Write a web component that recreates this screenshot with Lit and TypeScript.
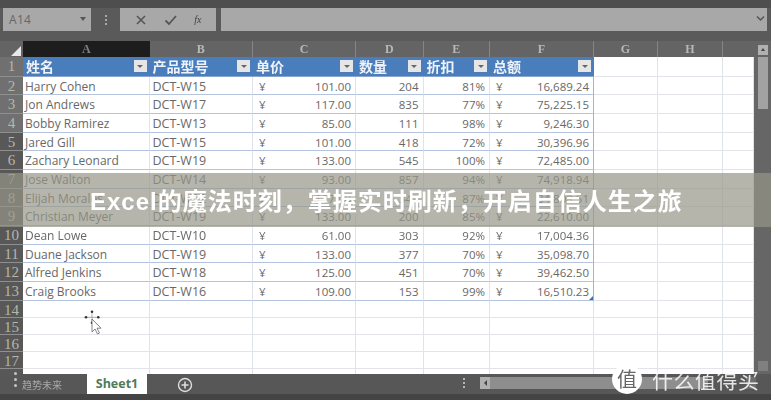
import { LitElement, html, css } from "lit";
import { customElement } from "lit/decorators.js";

const COLS = [
  ["A", 126.5], ["B", 103.5], ["C", 103], ["D", 67.5], ["E", 66.5], ["F", 104], ["G", 64], ["H", 65], ["", 31],
] as const;
const HEAD = ["姓名", "产品型号", "单价", "数量", "折扣", "总额"];
const ROWS = [
  ["Harry Cohen", "DCT-W15", "101.00", "204", "81%", "16,689.24"],
  ["Jon Andrews", "DCT-W17", "117.00", "835", "77%", "75,225.15"],
  ["Bobby Ramirez", "DCT-W13", "85.00", "111", "98%", "9,246.30"],
  ["Jared Gill", "DCT-W15", "101.00", "418", "72%", "30,396.96"],
  ["Zachary Leonard", "DCT-W19", "133.00", "545", "100%", "72,485.00"],
  ["Jose Walton", "DCT-W14", "93.00", "857", "94%", "74,918.94"],
  ["Elijah Morales", "DCT-W12", "117.00", "342", "87%", "34,808.51"],
  ["Christian Meyer", "DCT-W19", "133.00", "200", "85%", "22,610.00"],
  ["Dean Lowe", "DCT-W10", "61.00", "303", "92%", "17,004.36"],
  ["Duane Jackson", "DCT-W19", "133.00", "377", "70%", "35,098.70"],
  ["Alfred Jenkins", "DCT-W18", "125.00", "451", "70%", "39,462.50"],
  ["Craig Brooks", "DCT-W16", "109.00", "153", "99%", "16,510.23"],
];

@customElement("app-root")
export class AppRoot extends LitElement {
  static styles = css`
    :host { display: block; width: 771px; height: 400px; overflow: hidden; position: relative; background: #5a5a5a; font-family: "Liberation Sans", "Noto Sans CJK SC", sans-serif; }
    .shot { width: 771px; height: 400px; display: flex; flex-direction: column; filter: blur(0.6px); }
    .top { height: 8px; background: #4e4e4e; }
    .fbar { height: 23px; margin-bottom: 10px; display: flex; align-items: stretch; padding: 0 4px 0 3px; background: #5a5a5a; }
    .name { width: 88px; background: #a8a8a8; color: #666; font: 12px/23px "Open Sans", sans-serif; padding-left: 6px; box-sizing: border-box; position: relative; letter-spacing: .3px; }
    .name::after { content: ""; position: absolute; right: 5px; top: 9px; border: 3px solid transparent; border-top: 4px solid #555; }
    .dots { width: 29px; display: flex; flex-direction: column; gap: 2px; align-items: center; justify-content: center; }
    .dots i { width: 2px; height: 2px; background: #a8a8a8; }
    .btns { width: 96px; background: #a8a8a8; display: flex; align-items: center; justify-content: space-around; padding: 0 6px; box-sizing: border-box; color: #555; }
    .fx { font: italic 10px "Liberation Serif", serif; color: #444; }
    .formula { flex: 1; margin-left: 5px; background: #a8a8a8; position: relative; }
    .chev { position: absolute; right: 2px; top: 7px; }
    .hdr { display: flex; height: 16px; background: #646464; }
    .corner { width: 23px; position: relative; }
    .corner::after { content: ""; position: absolute; right: 2px; bottom: 1px; border-style: solid; border-width: 0 0 10px 10px; border-color: transparent transparent #e8e8e8 transparent; }
    .ch { box-sizing: border-box; border-right: 1px solid #858585; color: #b8b8b8; font: 700 12px/16px "Liberation Serif", serif; text-align: center; flex: none; }
    .ch.sel { background: #1d1d1d; color: #808080; border-right: 0; }
    .ch.last { border-right: 0; }
    .sb-top { margin-left: auto; width: 17px; display: flex; justify-content: center; padding-top: 4px; box-sizing: border-box; }
    .sb-top b { width: 10px; height: 10px; background: #b0b0b0; display: flex; align-items: center; justify-content: center; }
    .sb-top b::after { content: ""; border: 2px solid transparent; border-bottom: 3px solid #444; margin-top: -3px; }
    .body { display: flex; height: 317px; overflow: hidden; }
    .grid { flex: none; width: 754px; }
    .row { display: flex; height: 18.7px; }
    .row.first { height: 19.5px; }
    .row.e { height: 17px; }
    .rh { width: 23px; flex: none; box-sizing: border-box; background: #707070; color: #b6b6aa; font: 15px/19px "Liberation Serif", serif; text-align: center; border-bottom: 1px solid #8f8f8f; }
    .rh.d { background: #585858; }
    .c { flex: none; box-sizing: border-box; background: #fff; border-right: 1px solid #dfe3ea; border-bottom: 1px solid #e2e4ea; font: 11.5px/18px "Open Sans", "Noto Sans", sans-serif; color: #686868; padding: 1px 4px 0 3px; white-space: nowrap; overflow: hidden; position: relative; display: flex; justify-content: space-between; }
    .c.t { border-bottom-color: #b4c3de; }
    .c.bl { border-right-color: #9fb4d6; }
    .c.num { justify-content: flex-end; }
    .c.yen { padding-left: 6px; }
    .c.who { font-size: 12px; padding-left: 2px; }
    .c.sku { font-size: 12.5px; }
    .c.h { background: #4a7dbb; color: #eef3fa; font: 700 14px/18px "Noto Sans CJK SC", sans-serif; border-right: 0; border-bottom: 1px solid #8aa6cf; padding: 0 2px 0 3px; align-items: center; }
    .fl { width: 13px; height: 12px; background: #e6e6e6; display: flex; align-items: center; justify-content: center; margin-right: 1px; }
    .fl::after { content: ""; border: 3px solid transparent; border-top: 3px solid #666; margin-top: 3px; }
    .handle { position: absolute; right: 0; bottom: 0; border-style: solid; border-width: 0 0 4px 4px; border-color: transparent transparent #3f6fb0 transparent; }
    .sb { flex: 1; background: #666; display: flex; flex-direction: column; justify-content: space-between; align-items: center; padding-bottom: 3px; }
    .thumb { width: 10px; height: 52px; background: #a2a2a2; }
    .sb-end { width: 10px; height: 10px; background: #808080; }
    .tabs { height: 20px; background: #575757; display: flex; align-items: flex-start; position: relative; }
    .foot { flex: 1; background: #444; }
    .tab0 { width: 87px; color: #a8a8a8; font: 10px/22px "Noto Sans CJK SC", sans-serif; padding-left: 22px; box-sizing: border-box; position: relative; }
    .tab1 { width: 60px; height: 20px; background: #fff; color: #4f7a5c; font: 700 12.5px/20px "Open Sans", sans-serif; text-align: center; }
    .grip { position: absolute; left: 14px; top: -2px; display: flex; flex-direction: column; gap: 3px; }
    .grip i { width: 3px; height: 3px; border-radius: 50%; background: #c4c4c4; }
    .plus { margin: 3px 0 0 30px; }
    .hs { position: absolute; left: 480px; top: 3px; display: flex; align-items: center; gap: 0; height: 12px; width: 276px; }
    .hdots { position: absolute; left: 463px; top: 4px; display: flex; flex-direction: column; gap: 2px; }
    .hdots i { width: 2px; height: 2px; background: #b5b5b5; }
    .harrow { width: 10px; height: 12px; background: #b0b0b0; display: flex; align-items: center; justify-content: center; }
    .harrow::after { content: ""; border: 3px solid transparent; border-right: 3px solid #444; margin-left: -3px; }
    .hthumb { width: 218px; height: 12px; background: #8e8e8e; }
    .hright { margin-left: auto; width: 10px; height: 12px; background: #6e6e6e; }
    .wm { position: absolute; left: 612px; top: 364px; display: flex; align-items: center; gap: 10px; color: rgba(255,255,255,.85); font: 400 21px "Noto Sans CJK SC", sans-serif; letter-spacing: .5px; }
    .wm b { width: 30px; height: 30px; border-radius: 50%; background: #fff; color: #666; font: 400 20px/29px "Noto Sans CJK SC", sans-serif; text-align: center; letter-spacing: 0; }
    .banner { position: absolute; left: 0; right: 0; top: 173px; height: 54px; background: rgba(150,150,135,.7); display: flex; align-items: center; padding: 0 0 2px 90px; box-sizing: border-box; color: #fff; font: 700 24px "Liberation Sans", "Noto Sans CJK SC", sans-serif; letter-spacing: 1px; }
    .cursor { position: absolute; left: 84px; top: 309px; }
  `;

  private rh(n: number) { return html`<div class="rh ${n >= 5 ? "d" : ""}">${n}</div>`; }

  render() {
    const w = COLS.map((c) => c[1]);
    const cell = (i: number, cls: string, inner: unknown) => html`<div class="c ${cls}" style="width:${w[i]}px">${inner}</div>`;
    return html`
      <div class="shot">
        <div class="top"></div>
        <div class="fbar">
          <div class="name">A14</div>
          <div class="dots"><i></i><i></i><i></i></div>
          <div class="btns">
            <svg width="12" height="12" viewBox="0 0 12 12"><path d="M2 2l8 8M10 2l-8 8" stroke="#555" stroke-width="1.6"/></svg>
            <svg width="13" height="12" viewBox="0 0 13 12"><path d="M1.500 6.500l3.500 3.500 7-8" fill="none" stroke="#555" stroke-width="1.8"/></svg>
            <span class="fx">fx</span>
          </div>
          <div class="formula">
            <svg class="chev" width="9" height="7" viewBox="0 0 9 7"><path d="M1 1.500l3.500 3.500 3.500-3.500" fill="none" stroke="#555" stroke-width="1.500"/></svg>
          </div>
        </div>
        <div class="hdr">
          <div class="corner"></div>
          ${COLS.map((c, i) => html`<div class="ch ${i === 0 ? "sel" : ""} ${i === 8 ? "last" : ""}" style="width:${c[1]}px">${c[0]}</div>`)}
          <div class="sb-top"><b></b></div>
        </div>
        <div class="body">
          <div class="grid">
            <div class="row first">
              ${this.rh(1)}
              ${HEAD.map((h, i) => cell(i, "h", html`<span>${h}</span><span class="fl"></span>`))}
              ${[6, 7, 8].map((i) => cell(i, "", ""))}
            </div>
            ${ROWS.map((r, k) => html`
              <div class="row">
                ${this.rh(k + 2)}
                ${cell(0, "t who", r[0])}
                ${cell(1, "t sku", r[1])}
                ${cell(2, "t yen", html`<span>¥</span><span>${r[2]}</span>`)}
                ${cell(3, "t num", r[3])}
                ${cell(4, "t num", r[4])}
                ${cell(5, "t bl yen", html`<span>¥</span><span>${r[5]}</span>${k === 11 ? html`<span class="handle"></span>` : ""}`)}
                ${[6, 7, 8].map((i) => cell(i, "", ""))}
              </div>`)}
            ${[14, 15, 16, 17, 0].map((n) => html`
              <div class="row e">
                <div class="rh d">${n || ""}</div>
                ${COLS.map((_, i) => cell(i, "", ""))}
              </div>`)}
          </div>
          <div class="sb"><div class="thumb"></div><div class="sb-end"></div></div>
        </div>
        <div class="tabs">
          <div class="tab0"><span class="grip"><i></i><i></i><i></i></span>趋势未来</div>
          <div class="tab1">Sheet1</div>
          <svg class="plus" width="16" height="16" viewBox="0 0 16 16"><circle cx="8" cy="8" r="6.500" fill="none" stroke="#ddd" stroke-width="1.400"/><path d="M8 4.500v7M4.500 8h7" stroke="#ddd" stroke-width="1.600"/></svg>
          <div class="hdots"><i></i><i></i><i></i></div>
          <div class="hs"><div class="harrow"></div><div class="hthumb"></div><div class="hright"></div></div>
        </div>
        <div class="foot"></div>
      </div>
      <svg class="cursor" width="20" height="28" viewBox="0 0 20 28">
        <path d="M8 3v10M2 8.300h12" stroke="#888" stroke-width=".6"/>
        <circle cx="8" cy="2.700" r="1.300" fill="#333"/><circle cx="2" cy="8.300" r="1.300" fill="#333"/><circle cx="14.300" cy="8.300" r="1.300" fill="#333"/><circle cx="8" cy="13.700" r="1.300" fill="#333"/>
        <path d="M8 10v13l3-3 2.500 5 2-1-2.500-4.800h4z" fill="#fff" stroke="#666" stroke-width=".8"/>
      </svg>
      <div class="wm"><b>值</b><span>什么值得买</span></div>
      <div class="banner">Excel的魔法时刻，掌握实时刷新，开启自信人生之旅</div>
    `;
  }
}
